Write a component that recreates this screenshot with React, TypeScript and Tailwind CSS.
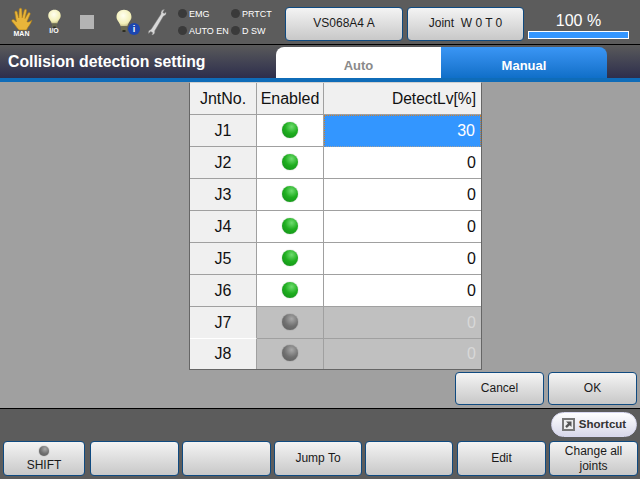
import React from "react";

const font = "font-['Liberation_Sans',Arial,sans-serif]";

const Bulb = ({ size = 24 }: { size?: number }) => (
  <svg width={size} height={size * 1.3} viewBox="0 0 24 31">
    <defs>
      <radialGradient id="bulbGlow" cx="0.45" cy="0.35" r="0.7">
        <stop offset="0" stopColor="#fffff0" />
        <stop offset="0.7" stopColor="#f3f0b8" />
        <stop offset="1" stopColor="#b8b27a" />
      </radialGradient>
    </defs>
    <path
      d="M12 1C6 1 2 5 2 10.500C2 15 6 17 7.500 23H16.500C18 17 22 15 22 10.500C22 5 18 1 12 1Z"
      fill="url(#bulbGlow)"
    />
    <rect x="8" y="23" width="8" height="6" rx="1" fill="#6b6b50" />
    <rect x="10" y="28" width="4" height="2.500" fill="#2b2b20" />
  </svg>
);

const Hand = () => (
  <svg width="22" height="24" viewBox="0 0 22 24">
    <path
      d="M8 23C5 20 3.500 17 1 14.500C0 13 2 11.500 3.500 13L5.500 15L3.800 5.500C3.500 3.800 5.800 3.300 6.200 5L7.800 11L8.200 2.500C8.300 0.700 10.700 0.700 10.800 2.500L11.200 10.800L13.300 3.200C13.800 1.500 16 2 15.600 3.800L14 11.500L17 6.300C17.900 4.800 19.800 5.800 19.100 7.400L16 14.500C16 15.500 18 15.500 21 13C20 17 17 19.500 15.500 23Z"
      fill="#e8b53a"
      stroke="#a87a18"
      strokeWidth="0.6"
    />
  </svg>
);

const Wrench = () => (
  <svg width="20" height="28" viewBox="0 0 20 28">
    <path
      d="M17.500 1.500C15 1.500 13.500 3.500 14 6L4 21.500C2.300 21.800 1 23.500 1.500 25.500L3.800 23.600L5.700 24.800L4.800 27C6.800 27 8.300 25 7.700 23L16.500 8C18.500 7.800 19.500 6 19 4L17 5.500L15.800 4.200Z"
      fill="#d8d8d8"
      stroke="#777"
      strokeWidth="0.5"
    />
  </svg>
);

const Dot = ({ label }: { label: string }) => (
  <div className="flex items-center gap-[2px] whitespace-nowrap">
    <span className="h-[9px] w-[9px] shrink-0 rounded-full bg-[#3a3a3a]" />
    <span className="text-[9px] leading-[10px] text-white">{label}</span>
  </div>
);

const Led = ({ on = true, small }: { on?: boolean; small?: boolean }) => (
  <span
    className={`block rounded-full ${small ? "h-[10px] w-[10px]" : "mb-[2px] h-[16px] w-[16px]"} ${
      on
        ? "bg-[radial-gradient(circle_at_60%_30%,#6fdc6f_0%,#1fae1f_45%,#0f8a17_100%)] shadow-[0_0_1px_#6a8a6a]"
        : "bg-[radial-gradient(circle_at_60%_30%,#a8a8a8_0%,#707070_50%,#5a5a5a_100%)] shadow-[0_0_1px_#555]"
    }`}
  />
);

const Btn = ({
  className = "",
  children,
}: {
  className?: string;
  children?: React.ReactNode;
}) => (
  <div
    className={`flex flex-col items-center justify-center rounded-[4px] border border-[#0f4a80] bg-gradient-to-b from-[#f4f4f4] to-[#c8c8c8] text-center text-[12px] leading-[15px] text-[#1a1a1a] ${className}`}
  >
    {children}
  </div>
);

const rows = [
  { id: "J1", value: "30", on: true, selected: true },
  { id: "J2", value: "0", on: true },
  { id: "J3", value: "0", on: true },
  { id: "J4", value: "0", on: true },
  { id: "J5", value: "0", on: true },
  { id: "J6", value: "0", on: true },
  { id: "J7", value: "0", on: false },
  { id: "J8", value: "0", on: false },
];

export default function App() {
  return (
    <div className={`${font} flex h-[479px] w-[640px] flex-col overflow-hidden bg-[#a0a0a0]`}>
      {/* status bar */}
      <div className="flex h-[45px] shrink-0 items-center border-b border-black bg-[#5c5c5c] pl-[5px]">
        <div className="flex w-[33px] flex-col items-center">
          <Hand />
          <span className="mt-[-1px] text-[7px] font-bold leading-[8px] text-white">MAN</span>
        </div>
        <div className="ml-[5px] flex w-[22px] flex-col items-center">
          <Bulb size={15} />
          <span className="mt-[-1px] text-[7px] font-bold leading-[8px] text-white">I/O</span>
        </div>
        <div className="ml-[15px] h-[14px] w-[14px] bg-[#b4b4b4]" />
        <div className="relative ml-[21px] mb-[3px]">
          <Bulb size={18} />
          <span className="absolute bottom-[-3px] right-[-7px] flex h-[12px] w-[12px] items-center justify-center rounded-full bg-[#1c46b0] text-[9px] font-bold leading-none text-white">
            i
          </span>
        </div>
        <div className="ml-[14px]">
          <Wrench />
        </div>
        <div className="ml-[11px] grid w-[104px] grid-cols-[53px_51px] gap-y-[7px]">
          <Dot label="EMG" />
          <Dot label="PRTCT" />
          <Dot label="AUTO EN" />
          <Dot label="D SW" />
        </div>
        <Btn className="ml-[3px] mt-[3px] h-[34px] w-[118px] text-[11.5px]">VS068A4 A</Btn>
        <Btn className="ml-[4px] mt-[3px] h-[34px] w-[117px]">Joint&nbsp; W 0 T 0</Btn>
        <div className="ml-[4px] mt-[5px] flex w-[101px] flex-col items-center">
          <span className="pt-[1px] text-[16px] leading-[18px] text-white">100 %</span>
          <div className="mt-[1px] h-[8px] w-full border border-white bg-[#3396ff]" />
        </div>
      </div>

      {/* title bar */}
      <div className="flex h-[33px] shrink-0 items-end bg-gradient-to-b from-[#5a5a5a] to-[#2e2e4c]">
        <div className="flex h-full w-[276px] items-center pl-[8px] pt-[1px] text-[15.8px] font-bold text-white">
          Collision detection setting
        </div>
        <div className="flex h-[31px] w-[165px] items-center justify-center rounded-tl-[8px] bg-white pt-[7px] text-[13px] font-bold text-[#8a8a8a]">
          Auto
        </div>
        <div className="flex h-[31px] w-[166px] items-center justify-center rounded-tr-[8px] bg-gradient-to-b from-[#3a96f5] to-[#0f6fc8] pt-[7px] text-[13px] font-bold text-white">
          Manual
        </div>
      </div>
      <div className="h-[4px] shrink-0 bg-[#0f6cb8]" />

      {/* main */}
      <div className="flex min-h-0 flex-1 flex-col">
        <div className="ml-[189px] w-[293px] border border-t-[#d0d0d0] border-[#666] bg-white text-[#111]">
          <div className="grid h-[32px] grid-cols-[67px_67px_1fr] text-[16px]">
            <div className="flex items-center justify-center border-r border-b border-[#a0a0a0] bg-[#f0f0f0]">
              JntNo.
            </div>
            <div className="flex items-center justify-center border-r border-b border-[#a0a0a0] bg-[#f0f0f0]">
              Enabled
            </div>
            <div className="flex items-center justify-end border-b border-[#a0a0a0] bg-[#f0f0f0] pr-[5px] text-[15.6px]">
              DetectLv[%]
            </div>
          </div>
          {rows.map((r, i) => (
            <div
              key={r.id}
              className="grid h-[32px] grid-cols-[67px_67px_1fr] text-[16px] last:h-[30px]"
            >
              <div
                className={`flex items-center justify-center border-r border-[#a0a0a0] bg-[#f0f0f0] ${
                  i < 7 ? "border-b" : ""
                } ${r.on ? "border-b-[#a0a0a0]" : "border-b-white"}`}
              >
                {r.id}
              </div>
              <div
                className={`flex items-center justify-center border-r border-[#a0a0a0] ${
                  i < 7 ? "border-b" : ""
                } ${r.on ? "bg-white" : "bg-[#c0c0c0]"}`}
              >
                <Led on={r.on} />
              </div>
              <div
                className={`flex items-center justify-end pr-[5px] ${
                  r.selected
                    ? "border border-dotted border-[#d0802a] border-b-[#a0a0a0] bg-[#3396ff] text-white"
                    : i < 7
                      ? "border-b border-[#a0a0a0]"
                      : ""
                } ${r.on ? (r.selected ? "" : "bg-white") : "bg-[#c0c0c0] text-[#d8d8d8]"}`}
              >
                {r.value}
              </div>
            </div>
          ))}
        </div>
        <div className="mt-[2px] flex w-full justify-end gap-[4px] pr-[3px]">
          <Btn className="h-[33px] w-[89px]">Cancel</Btn>
          <Btn className="h-[33px] w-[89px]">OK</Btn>
        </div>
      </div>

      {/* footer */}
      <div className="flex h-[71px] shrink-0 flex-col border-t border-black bg-[#5c5c5c]">
        <div className="flex h-[32px] items-start justify-end pr-[3px] pt-[3px]">
          <div className="flex h-[25px] w-[86px] items-center justify-center gap-[4px] rounded-full border border-[#d8d8f0] bg-gradient-to-b from-white to-[#d8d8ea] text-[11.5px] font-bold text-[#333]">
            <svg width="13" height="13" viewBox="0 0 13 13">
              <rect x="1" y="1" width="11" height="11" fill="#eee" stroke="#777" strokeWidth="2" />
              <path d="M4 3.500H9.500V9L7.800 7.300L4.800 10L3.200 8.300L6 5.400Z" fill="#555" />
            </svg>
            Shortcut
          </div>
        </div>
        <div className="flex h-[35px] items-stretch pl-[3px]">
          <Btn className="w-[82px] pt-[2px]">
            <Led on={false} small />
            <span className="mt-[2px]">SHIFT</span>
          </Btn>
          <Btn className="ml-[5px] w-[89px]" />
          <Btn className="ml-[3px] w-[89px]" />
          <Btn className="ml-[3px] w-[88px]">Jump To</Btn>
          <Btn className="ml-[3px] w-[88px]" />
          <Btn className="ml-[4px] w-[89px]">Edit</Btn>
          <Btn className="ml-[3px] w-[89px]">
            Change all
            <br />
            joints
          </Btn>
        </div>
      </div>
    </div>
  );
}
